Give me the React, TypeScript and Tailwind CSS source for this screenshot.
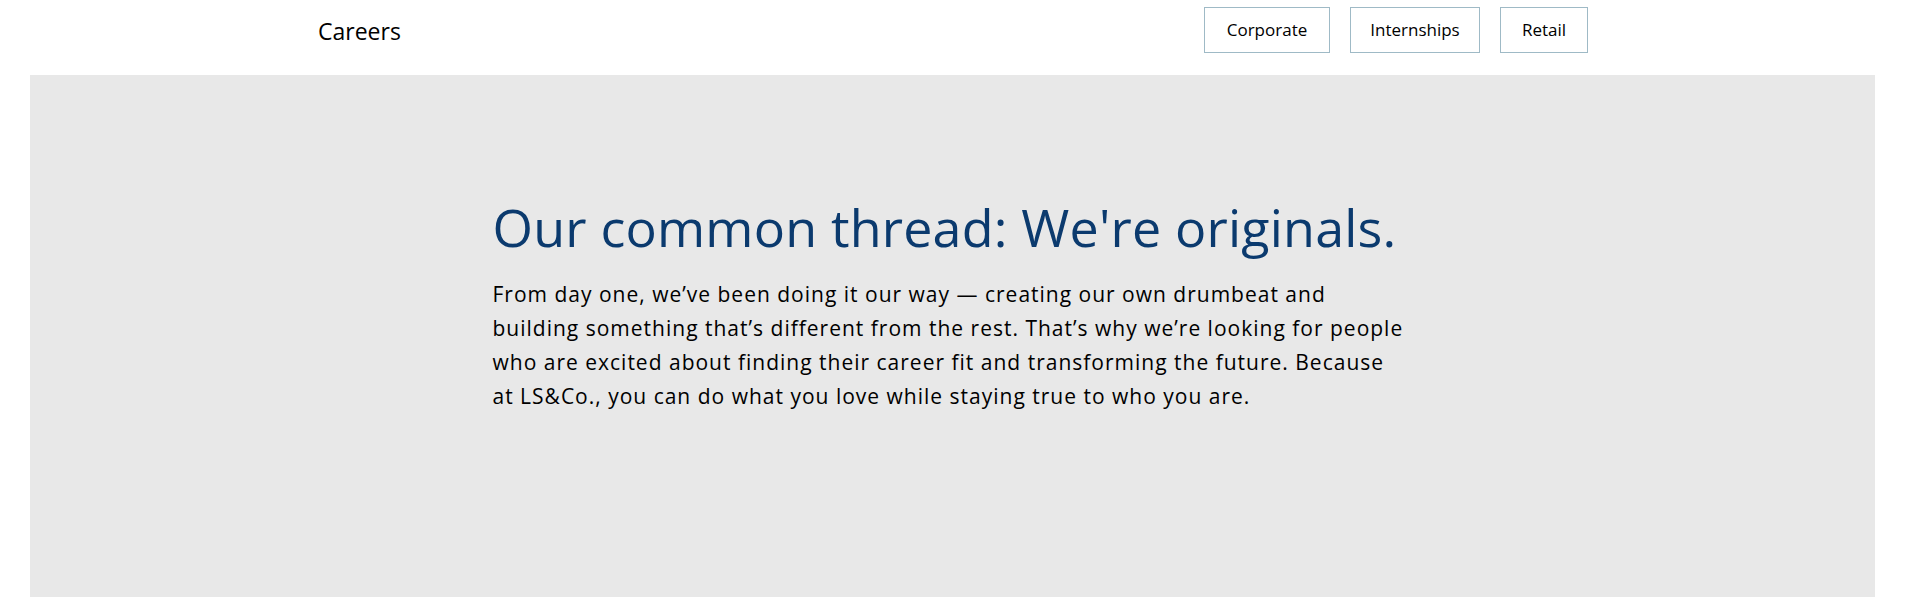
export default function App() {
  const font = { fontFamily: "'Open Sans', Lato, sans-serif" };
  return (
    <div className="min-h-[597px] bg-white" style={font}>
      <header className="h-[75px] flex items-start justify-between pl-[318px] pr-[317px]">
        <span className="mt-[17px] text-[23px] text-black leading-[28px]">Careers</span>
        <nav className="mt-[7px] flex gap-5">
          {[
            ["Corporate", "w-[126px]"],
            ["Internships", "w-[130px]"],
            ["Retail", "w-[88px]"],
          ].map(([t, w]) => (
            <a
              key={t}
              className={`${w} h-[46px] flex items-center justify-center border border-[#9fbac6] text-[17px] text-black`}
            >
              {t}
            </a>
          ))}
        </nav>
      </header>
      <section className="mx-[30px] h-[522px] bg-[#e8e8e8] flex justify-center">
        <div className="w-[920px] pt-[120px]">
          <h1 className="text-[52px] leading-[64px] text-[#0b3a6e] font-normal whitespace-nowrap tracking-[0.2px]">
            Our common thread: We're originals.
          </h1>
          <p className="mt-[18px] text-[21px] leading-[34px] text-black whitespace-nowrap tracking-[1px]">
            From day one, we’ve been doing it our way — creating our own drumbeat and
            <br />
            building something that’s different from the rest. That’s why we’re looking for people
            <br />
            who are excited about finding their career fit and transforming the future. Because
            <br />
            at LS&amp;Co., you can do what you love while staying true to who you are.
          </p>
        </div>
      </section>
    </div>
  );
}
